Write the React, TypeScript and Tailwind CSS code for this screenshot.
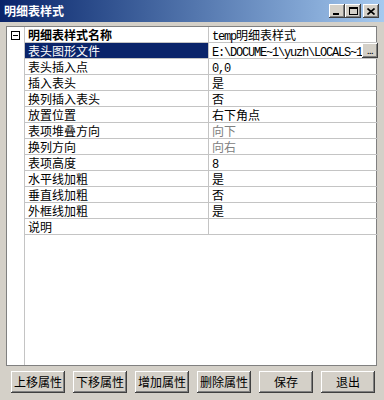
const rows: { name: string; value: string; gray?: boolean; selected?: boolean }[] = [
  { name: '表头图形文件', value: 'E:\\DOCUME~1\\yuzh\\LOCALS~1', selected: true },
  { name: '表头插入点', value: '0,0' },
  { name: '插入表头', value: '是' },
  { name: '换列插入表头', value: '否' },
  { name: '放置位置', value: '右下角点' },
  { name: '表项堆叠方向', value: '向下', gray: true },
  { name: '换列方向', value: '向右', gray: true },
  { name: '表项高度', value: '8' },
  { name: '水平线加粗', value: '是' },
  { name: '垂直线加粗', value: '否' },
  { name: '外框线加粗', value: '是' },
  { name: '说明', value: '' },
];

const bevel =
  'bg-[#d4d0c8] shadow-[inset_-1px_-1px_0_#404040,inset_1px_1px_0_#ffffff,inset_-2px_-2px_0_#808080]';

// ascii runs get the narrow SimSun-like advance
function Val({ text }: { text: string }) {
  const parts = text.split(/([\x00-\x7f]+)/).filter(Boolean);
  return (
    <>
      {parts.map((p, i) =>
        /^[\x00-\x7f]+$/.test(p) ? (
          <span key={i} className="font-['Liberation_Mono',monospace] tracking-[-1.2px]">
            {p}
          </span>
        ) : (
          <span key={i}>{p}</span>
        )
      )}
    </>
  );
}

function TitleButton({ children }: { children: React.ReactNode }) {
  return (
    <div className={`${bevel} w-[16px] h-[14px] flex items-center justify-center`}>{children}</div>
  );
}

export default function App() {
  return (
    <div className="w-[384px] h-[400px] bg-[#d4d0c8] flex flex-col font-['Noto_Sans_CJK_SC',sans-serif] text-[12px] text-black overflow-hidden">
      {/* title bar */}
      <div className="h-[22px] flex items-center pl-[4px] pr-[5px] bg-gradient-to-r from-[#0a246a] to-[#a6caf0]">
        <span className="text-white font-bold leading-none flex-1">明细表样式</span>
        <div className="flex items-center">
          <TitleButton>
            <div className="w-[6px] h-[2px] bg-black mt-[6px] ml-[-2px]" />
          </TitleButton>
          <TitleButton>
            <div className="w-[9px] h-[8px] border border-black border-t-2" />
          </TitleButton>
          <div className="w-[2px]" />
          <TitleButton>
            <svg width="8" height="7" viewBox="0 0 8 7">
              <path d="M0.5 0.5 L7.5 6.5 M7.5 0.5 L0.5 6.5" stroke="#000" strokeWidth="1.6" />
            </svg>
          </TitleButton>
        </div>
      </div>

      {/* property grid */}
      <div className="mt-[4px] ml-[6px] mr-[7px] h-[340px] border border-[#808080] bg-white flex">
        <div className="w-[18px] border-r border-[#c4c4c4] shrink-0 flex flex-col">
          <div className="h-[16px] flex items-center pl-[4px]">
            <div className="w-[9px] h-[9px] border border-black flex items-center justify-center">
              <div className="w-[5px] h-[1px] bg-black" />
            </div>
          </div>
        </div>
        <div className="flex-1 flex flex-col">
          <div className="h-[16px] flex border-b border-[#c4c4c4]">
            <div className="w-[184px] pl-[3px] font-bold leading-[15px] border-r border-[#c4c4c4]">
              明细表样式名称
            </div>
            <div className="flex-1 pl-[3px] leading-[15px]">
              <Val text="temp明细表样式" />
            </div>
          </div>
          {rows.map((r) => (
            <div key={r.name} className="h-[16px] flex border-b border-[#c4c4c4]">
              <div
                className={`w-[184px] pl-[3px] leading-[15px] border-r border-[#c4c4c4] ${
                  r.selected ? 'bg-[#0a246a] text-white' : ''
                }`}
              >
                {r.name}
              </div>
              <div
                className={`flex-1 pl-[3px] leading-[15px] flex items-start ${
                  r.gray ? 'text-[#808080]' : ''
                }`}
              >
                <span className="flex-1 whitespace-nowrap">
                  <Val text={r.value} />
                </span>
                {r.selected && (
                  <div className={`${bevel} w-[16px] h-[15px] shrink-0 flex items-end justify-center pb-[3px]`}>
                    <span className="text-[9px] leading-none tracking-[-0.5px]">...</span>
                  </div>
                )}
              </div>
            </div>
          ))}
        </div>
      </div>

      {/* buttons */}
      <div className="mt-[5px] ml-[11px] flex gap-[8px]">
        {['上移属性', '下移属性', '增加属性', '删除属性', '保存', '退出'].map((t) => (
          <button
            key={t}
            className={`${bevel} w-[54px] h-[22px] flex items-center justify-center text-[12px] leading-none`}
          >
            {t}
          </button>
        ))}
      </div>
    </div>
  );
}
